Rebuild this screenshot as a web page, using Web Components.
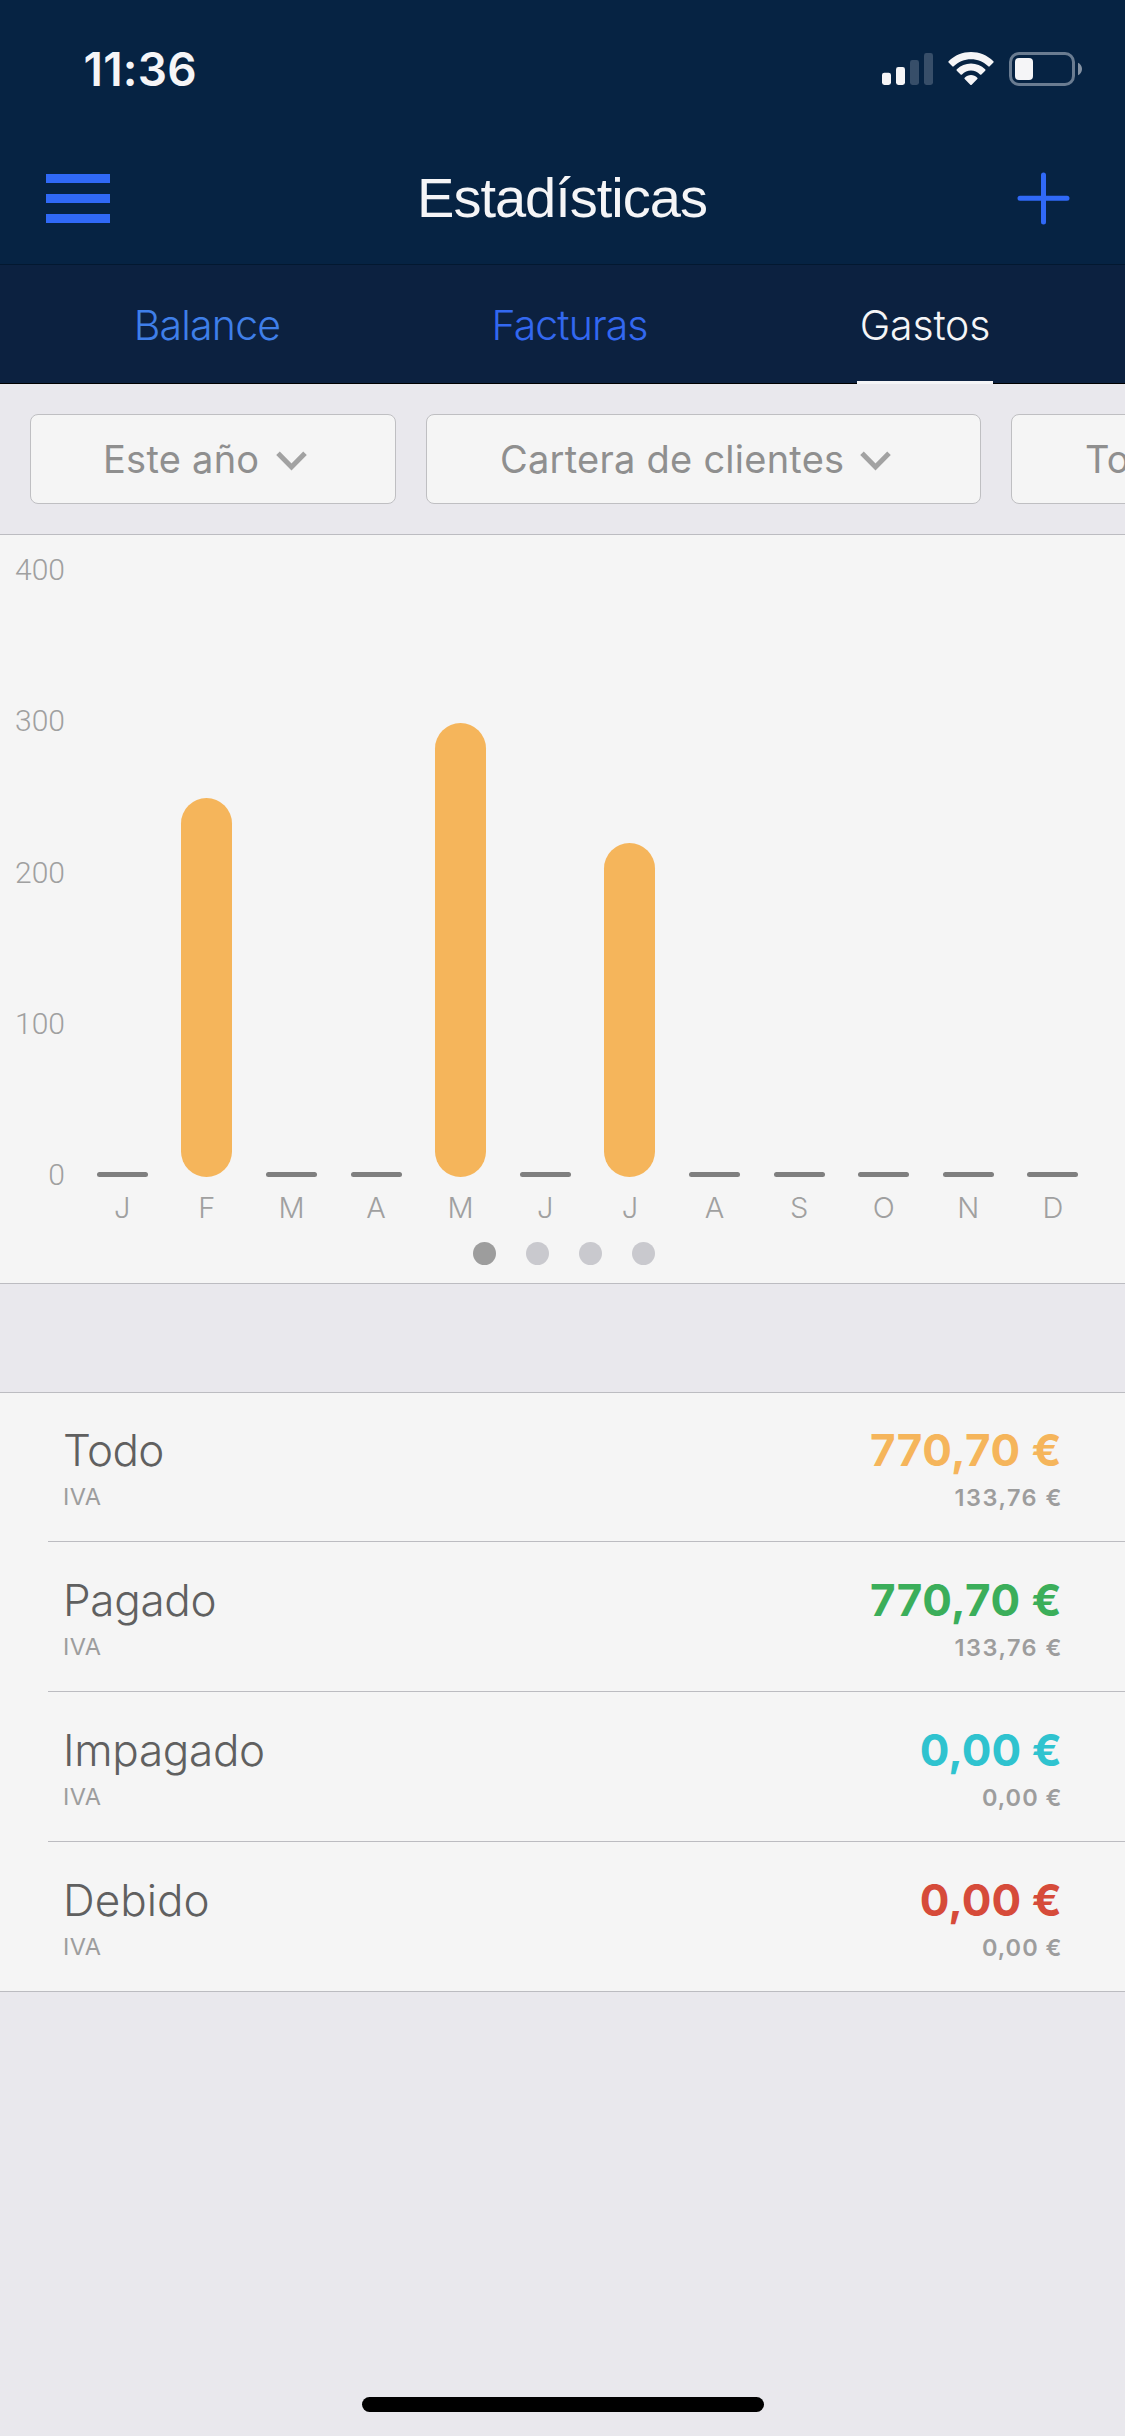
<!DOCTYPE html>
<html lang="es">
<head>
<meta charset="utf-8">
<title>Estadísticas</title>
<style>
  html, body { margin: 0; height: 100%; }
  body { background: #e9e8ed; font-family: Inter, "Liberation Sans", sans-serif; overflow: hidden; }
</style>
</head>
<body>
<stats-screen>
  <status-bar>11:36</status-bar>
  <nav-bar>Estadísticas</nav-bar>
  <tab-strip>
    <tab-item style="--w:150px;--c:#3f7fe9;--ls:-.8px">Balance</tab-item>
    <tab-item style="--w:160px;--c:#3368f0;--ls:-.9px">Facturas</tab-item>
    <tab-item style="--w:136px;--c:#f5f5f7;--ls:-.2px" selected>Gastos</tab-item>
  </tab-strip>
  <filter-row>
    <filter-button style="--w:366px;--gap:17px">Este año</filter-button>
    <filter-button style="--w:555px;--pl:73px">Cartera de clientes</filter-button>
    <filter-button style="--w:366px;--pl:73px">To</filter-button>
  </filter-row>
  <bar-chart max="400" values="0,250.5,0,0,300.5,0,221,0,0,0,0,0" months="J,F,M,A,M,J,J,A,S,O,N,D"></bar-chart>
  <totals-list>
    <total-row style="--c:#f5b55b;--ls:.45px;--ls2:1.5px;--lsn:-.6px"><span slot="name">Todo</span><span slot="amount">770,70 €</span><span slot="tax">133,76 €</span></total-row>
    <total-row style="--c:#3bae5a;--ls:.45px;--ls2:1.5px"><span slot="name">Pagado</span><span slot="amount">770,70 €</span><span slot="tax">133,76 €</span></total-row>
    <total-row style="--c:#2fc3cf;--ls:.1px;--ls2:1px"><span slot="name">Impagado</span><span slot="amount">0,00 €</span><span slot="tax">0,00 €</span></total-row>
    <total-row style="--c:#d64b3a;--ls:.1px;--ls2:1px;--lsn:0px"><span slot="name">Debido</span><span slot="amount">0,00 €</span><span slot="tax">0,00 €</span></total-row>
  </totals-list>
  <home-indicator></home-indicator>
</stats-screen>
<script>
const define = (name, html, setup) => customElements.define(name, class extends HTMLElement {
  constructor() {
    super();
    this.attachShadow({ mode: 'open' }).innerHTML = html;
  }
  connectedCallback() { if (setup) setup(this, this.shadowRoot); }
});

define('stats-screen', `
<style>:host{display:flex;flex-direction:column;width:1125px;height:2436px;background:#e9e8ed;overflow:hidden}</style>
<slot></slot>`);

define('status-bar', `
<style>
:host{display:flex;box-sizing:border-box;flex:none;height:132px;padding:49px 43px 0 83.5px;justify-content:space-between;align-items:flex-start;background:#062343;color:#f5f5f7;font:600 46px/40px Inter,sans-serif;letter-spacing:.2px}
svg{display:block}
</style>
<slot></slot>
<svg width="200" height="40" viewBox="882 49 200 40">
  <g fill="#f5f5f7"><rect x="882" y="72.7" width="9" height="12.3" rx="2.4"/><rect x="896" y="67" width="9" height="18" rx="2.4"/></g>
  <g fill="#374e69"><rect x="910" y="60" width="9" height="25" rx="2.4"/><rect x="924" y="53" width="9" height="32" rx="2.4"/></g>
  <g fill="#f5f5f7">
    <path d="M948.6 61.2C955 55 962.700 52 971 52s16 3 22.400 9.200q.7.700 0 1.400l-3.700 3.700q-.7.700-1.400 0C983.500 61.800 977.500 59.200 971 59.200s-12.500 2.600-17.300 7.100q-.7.700-1.400 0l-3.700-3.700q-.7-.7 0-1.400z"/>
    <path d="M956.800 69.300C960.700 65.700 965.600 63.500 971 63.500s10.300 2.200 14.200 5.800q.7.700 0 1.400l-3.800 3.800q-.7.700-1.400 0C977.500 72.100 974.400 70.600 971 70.600s-6.500 1.500-9 3.900q-.7.700-1.400 0l-3.800-3.800q-.7-.7 0-1.400z"/>
    <path d="M964.700 77.700C966.400 76 968.600 75 971 75s4.600 1 6.300 2.700q.7.700 0 1.400l-5.600 5.600q-.7.700-1.400 0l-5.600-5.600q-.7-.7 0-1.400z"/>
  </g>
  <rect x="1010.500" y="53.500" width="63" height="31" rx="8.500" fill="none" stroke="#6a7c91" stroke-width="3"/>
  <rect x="1015" y="58" width="18" height="22" rx="4" fill="#f5f5f7"/>
  <path d="M1078 62.800c2.400 1 4 3.400 4 6.200s-1.600 5.200-4 6.200z" fill="#8492a3"/>
</svg>`);

define('nav-bar', `
<style>
:host{display:flex;box-sizing:border-box;flex:none;height:133px;padding:0 55px 0 46px;justify-content:space-between;align-items:center;background:#062343;border-bottom:1px solid #031830}
h1{margin:0 3px 1px 0;font:400 56px/64px "Liberation Sans",Arial,sans-serif;letter-spacing:-1px;color:#f5f5f7}
.menu{display:flex;flex-direction:column;gap:11px;width:64px}
.menu i{height:9px;background:#3069f7}
svg{display:block}
</style>
<div class="menu"><i></i><i></i><i></i></div>
<h1><slot></slot></h1>
<svg width="53" height="53" viewBox="0 0 53 53" stroke="#3069f7" stroke-width="5" stroke-linecap="round"><path d="M26.500 3v47M3 26.200h47"/></svg>`);

define('tab-strip', `
<style>:host{display:flex;box-sizing:border-box;flex:none;height:119px;padding-left:132px;gap:207.5px;background:linear-gradient(#000,#000) bottom/100% 1px no-repeat #0c2140}</style>
<slot></slot>`);

define('tab-item', `
<style>
:host{display:flex;flex:none;box-sizing:border-box;width:var(--w);height:119px;justify-content:center;align-items:center;padding-top:4px;border-bottom:3px solid transparent;color:var(--c);font:300 41px/50px Inter,sans-serif;letter-spacing:var(--ls)}
:host([selected]){border-bottom-color:#f5f5f7}
</style>
<slot></slot>`);

define('filter-row', `
<style>:host{display:flex;box-sizing:border-box;flex:none;height:151px;padding:30px 0 0 30px;gap:30px;overflow:hidden;border-bottom:1px solid #bcbcc1}</style>
<slot></slot>`);

define('filter-button', `
<style>
:host{display:flex;flex:none;box-sizing:border-box;width:var(--w);height:90px;padding-left:var(--pl,72px);align-items:center;gap:var(--gap,16px);background:#f5f5f5;border:1px solid #bfbfc2;border-radius:8px;color:#8f8f8f;font:400 38px/46px Inter,sans-serif;letter-spacing:.25px;white-space:nowrap}
svg{display:block;margin-top:3px}
</style>
<span><slot></slot></span>
<svg width="31" height="20" viewBox="0 0 31 20" fill="none" stroke="#a2a2a2" stroke-width="5"><path d="M2 2.200 15.500 16 29 2.200"/></svg>`);

define('bar-chart', `
<style>
:host{display:flex;flex-direction:column;box-sizing:border-box;flex:none;height:749px;background:#f5f5f5;border-bottom:1px solid #bcbcc1}
.plot{display:flex;height:662px}
.axis{display:flex;flex-direction:column;justify-content:space-between;box-sizing:border-box;width:80px;height:662px;padding:12px 15px 0 0;text-align:right;font:300 30px/45px Roboto,sans-serif;color:#a0a0a0}
.cols{display:grid;grid-template-columns:repeat(12,84.600px);height:700px}
.col{display:flex;flex-direction:column;align-items:center;justify-content:flex-end}
.bar{width:51px;background:#f5b55b;border-radius:25.500px}
.stub{width:51px;height:5px;background:#7f7f7f;border-radius:2.500px}
.col span{height:58px;font:300 29px/61px Inter,sans-serif;color:#a0a0a0}
.dots{display:flex;gap:30px;margin:45px 0 0 473px}
.dots i{width:23px;height:23px;border-radius:50%;background:#c9c9ce}
.dots i:first-child{background:#9d9d9d}
</style>
<div class="plot"><div class="axis"></div><div class="cols"></div></div>
<div class="dots"><i></i><i></i><i></i><i></i></div>`, (el, root) => {
  const max = +el.getAttribute('max');
  const plotHeight = 605;
  const months = el.getAttribute('months').split(',');
  root.querySelector('.axis').innerHTML = [4, 3, 2, 1, 0].map(i => `<div>${max / 4 * i}</div>`).join('');
  root.querySelector('.cols').innerHTML = el.getAttribute('values').split(',').map((v, i) =>
    `<div class="col"><div class="${+v ? 'bar' : 'stub'}"${+v ? ` style="height:${v / max * plotHeight}px"` : ''}></div><span>${months[i]}</span></div>`).join('');
});

define('totals-list', `
<style>:host{display:flex;flex-direction:column;box-sizing:border-box;flex:none;height:600px;margin-top:108px;background:#f5f5f5;border-top:1px solid #bcbcc1;border-bottom:1px solid #bcbcc1}</style>
<slot></slot>`);

define('total-row', `
<style>
:host{display:flex;box-sizing:border-box;flex:none;height:150px;margin-left:48px;padding:30px 63px 0 15px;justify-content:space-between;border-bottom:1px solid #bcbcc1}
:host(:first-child){height:149px;padding-top:29px}
:host(:last-child){border:0}
.l,.r{display:flex;flex-direction:column}
.r{align-items:flex-end}
.name{font:300 44px/56px Inter,sans-serif;letter-spacing:var(--lsn,-.3px);color:#606060}
.sub{font:400 23.5px/37px Inter,sans-serif;color:#9d9d9d;letter-spacing:.4px}
.amount{font:700 44px/56px Inter,sans-serif;letter-spacing:var(--ls);color:var(--c)}
.r .sub{font-size:23.5px;line-height:39px;font-weight:600;letter-spacing:var(--ls2);margin-right:calc(.5px - var(--ls2))}
</style>
<div class="l"><div class="name"><slot name="name"></slot></div><div class="sub">IVA</div></div>
<div class="r"><div class="amount"><slot name="amount"></slot></div><div class="sub"><slot name="tax"></slot></div></div>`);

define('home-indicator', `
<style>:host{display:block;flex:none;width:402px;height:15px;margin:auto auto 24px 362px;border-radius:7.500px;background:#000}</style>`);
</script>
</body>
</html>
